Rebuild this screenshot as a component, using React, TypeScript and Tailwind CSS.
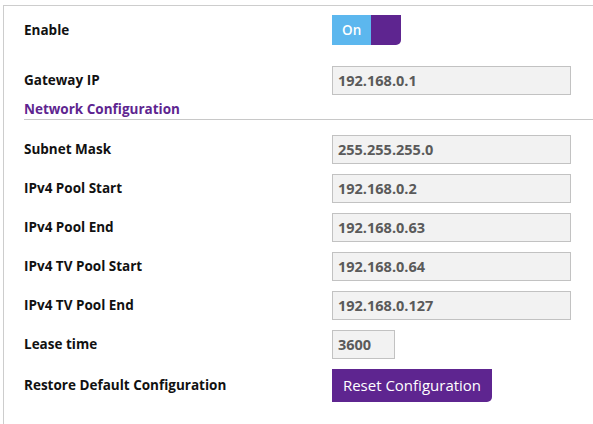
import React from 'react';

const font = { fontFamily: '"Open Sans", "Liberation Sans", sans-serif' };

const Field = ({ label, value, short }: { label: string; value: string; short?: boolean }) => (
  <div className="flex items-center h-[29px]">
    <div className="w-[308px] text-[13.5px] font-bold text-[#111]">{label}</div>
    <div
      className={`h-[29px] border border-[#c2c2c2] bg-[#f2f2f2] flex items-center px-[5px] text-[14.5px] font-bold text-[#5a5a5a] ${
        short ? 'w-[63px]' : 'w-[239px]'
      }`}
    >
      {value}
    </div>
  </div>
);

export default function App() {
  return (
    <div className="w-[593px] h-[424px] bg-white pt-[5px] pl-[3px] overflow-hidden" style={font}>
      <div className="h-full border-t border-l border-[#cdcdcd] pl-[20px] pt-[9px]">
        <div className="flex items-center h-[30px]">
          <div className="w-[308px] text-[13.5px] font-bold text-[#111]">Enable</div>
          <div className="flex h-[30px] rounded-br-[5px] overflow-hidden">
            <div className="w-[39px] bg-[#5cb7ee] text-white text-[13.5px] font-semibold flex items-center pl-[10px]">On</div>
            <div className="w-[30px] bg-[#5e2590]" />
          </div>
        </div>

        <div className="mt-[21px]">
          <Field label="Gateway IP" value="192.168.0.1" />
        </div>

        <div className="mt-[6px] pb-[2px] border-b border-[#c8c8c8] text-[13.5px] leading-[16px] font-bold text-[#5e2590]">
          Network Configuration
        </div>

        <div className="mt-[15px] flex flex-col gap-[10px]">
          <Field label="Subnet Mask" value="255.255.255.0" />
          <Field label="IPv4 Pool Start" value="192.168.0.2" />
          <Field label="IPv4 Pool End" value="192.168.0.63" />
          <Field label="IPv4 TV Pool Start" value="192.168.0.64" />
          <Field label="IPv4 TV Pool End" value="192.168.0.127" />
          <Field label="Lease time" value="3600" short />
          <div className="flex items-center h-[33px]">
            <div className="w-[308px] text-[13.5px] font-bold text-[#111]">Restore Default Configuration</div>
            <button className="h-[33px] w-[160px] bg-[#5e2590] text-white text-[15px] rounded-br-[5px] flex items-center justify-center">
              Reset Configuration
            </button>
          </div>
        </div>
      </div>
    </div>
  );
}
